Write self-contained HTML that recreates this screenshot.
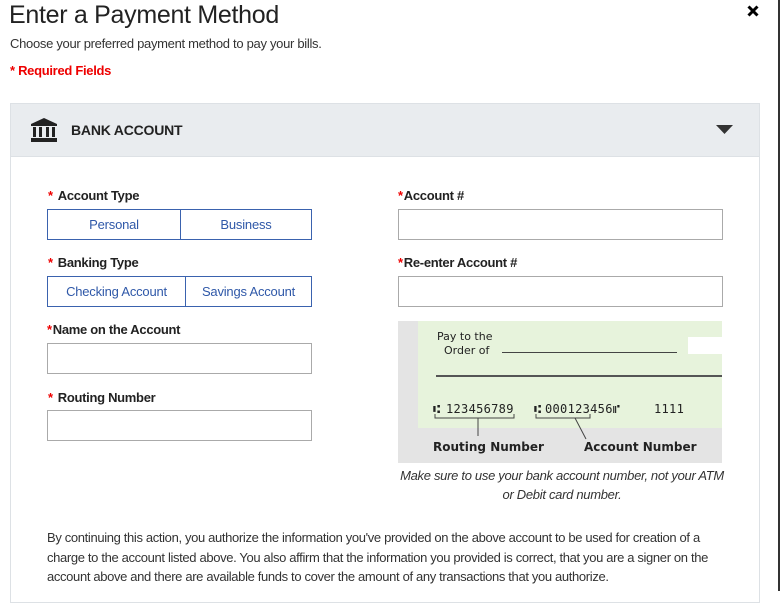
<!DOCTYPE html>
<html><head><style>
*{margin:0;padding:0;box-sizing:border-box}
body{width:780px;height:591px;overflow:hidden;background:#fff;font-family:"Liberation Sans Narrow","Liberation Sans",sans-serif;color:#222;position:relative}
.a{position:absolute}
h1{position:absolute;left:9px;top:1px;font-weight:normal;font-size:25px;font-family:"Liberation Sans",sans-serif;color:#222;letter-spacing:-0.3px}
.sub{left:10px;top:36px;font-size:13px;letter-spacing:-0.3px;font-family:"Liberation Sans",sans-serif;color:#333}
.req{left:10px;top:63px;font-size:13px;font-weight:bold;color:#e00;letter-spacing:-0.3px}
.panel{left:10px;top:103px;width:750px;height:500px;border:1px solid #dde1e5}
.hdr{left:11px;top:104px;width:748px;height:53px;background:#e9ecef;border-bottom:1px solid #dde1e5}
.lbl{font-size:13px;font-weight:bold;color:#222;letter-spacing:-0.3px}
.lbl i{color:#e00;font-style:normal;margin-right:5px}
.seg{display:flex;border:1px solid #3a62ae;height:31px}
.seg div{display:flex;align-items:center;justify-content:center;color:#2f58a8;font-size:13px;font-family:"Liberation Sans",sans-serif;letter-spacing:-0.2px}
.seg div+div{border-left:1px solid #3a62ae}
.inp{border:1px solid #aaa;height:31px;width:265px}
.disc{left:47px;top:528px;width:690px;font-size:13px;line-height:19.5px;color:#333;letter-spacing:-0.35px}
.m{position:absolute;top:402px;font-size:12px;color:#222;font-family:'DejaVu Sans Mono',monospace;white-space:pre;letter-spacing:0.3px}
</style></head><body>
<h1>Enter a Payment Method</h1>
<div class="a sub">Choose your preferred payment method to pay your bills.</div>
<div class="a req">* Required Fields</div>
<div class="a" style="right:0;top:0;width:2px;height:591px;background:#333"></div>
<svg class="a" style="left:747px;top:5px" width="12" height="12"><path d="M1.5 1.5L10.5 10.5M10.5 1.5L1.5 10.5" stroke="#000" stroke-width="3"/></svg>
<div class="a panel"></div>
<div class="a hdr"></div>
<svg class="a" style="left:30px;top:117px" width="28" height="26" viewBox="0 0 28 26"><path d="M14 1 L27 7 L27 9 L1 9 L1 7 Z" fill="#222"/><rect x="3" y="10" width="3" height="10" fill="#222"/><rect x="9" y="10" width="3" height="10" fill="#222"/><rect x="16" y="10" width="3" height="10" fill="#222"/><rect x="22" y="10" width="3" height="10" fill="#222"/><rect x="1" y="21" width="26" height="4" fill="#222"/></svg>
<div class="a" style="left:71px;top:122px;font-size:14px;font-weight:bold;color:#222;letter-spacing:-0.2px">BANK ACCOUNT</div>
<svg class="a" style="left:716px;top:125px" width="18" height="10"><path d="M0 0H17L8.5 9Z" fill="#333"/></svg>

<div class="a lbl" style="left:48px;top:188px"><i>*</i>Account Type</div>
<div class="a seg" style="left:47px;top:209px;width:265px"><div style="width:132px">Personal</div><div style="flex:1">Business</div></div>
<div class="a lbl" style="left:48px;top:255px"><i>*</i>Banking Type</div>
<div class="a seg" style="left:47px;top:276px;width:265px"><div style="width:137px">Checking Account</div><div style="flex:1">Savings Account</div></div>
<div class="a lbl" style="left:47px;top:322px"><i style="margin-right:1px">*</i>Name on the Account</div>
<div class="a inp" style="left:47px;top:343px"></div>
<div class="a lbl" style="left:48px;top:390px"><i>*</i>Routing Number</div>
<div class="a inp" style="left:47px;top:410px"></div>

<div class="a lbl" style="left:398px;top:188px"><i style="margin-right:1px">*</i>Account #</div>
<div class="a inp" style="left:398px;top:209px;width:325px"></div>
<div class="a lbl" style="left:398px;top:255px"><i style="margin-right:1px">*</i>Re-enter Account #</div>
<div class="a inp" style="left:398px;top:276px;width:325px"></div>

<div class="a" style="left:398px;top:321px;width:324px;height:142px;background:#e4e4e4"></div>
<div class="a" style="left:418px;top:321px;width:304px;height:107px;background:#e7f3dc"></div>
<div class="a" style="left:688px;top:337px;width:34px;height:17px;background:#fff"></div>
<div class="a" style="left:437px;top:330px;font-size:11px;line-height:14px;color:#222;font-family:'DejaVu Sans',sans-serif">Pay to the<br>&nbsp;&nbsp;Order of</div>
<div class="a" style="left:502px;top:352px;width:175px;height:1px;background:#444"></div>
<div class="a" style="left:436px;top:375px;width:286px;height:2px;background:#555"></div>
<div class="m" style="left:433px">⑆</div>
<div class="m" style="left:446px">123456789</div>
<div class="m" style="left:534px">⑆</div>
<div class="m" style="left:545px">000123456⑈</div>
<div class="m" style="left:654px">1111</div>
<svg class="a" style="left:430px;top:414px" width="170" height="30"><path d="M5 0V4H84V0M48 4V22M106 0V4H160V0M145 4L156 25" fill="none" stroke="#444" stroke-width="1"/></svg>
<div class="a" style="left:433px;top:440px;font-size:12px;font-weight:bold;color:#222;font-family:'DejaVu Sans',sans-serif">Routing Number</div>
<div class="a" style="left:584px;top:440px;font-size:12px;font-weight:bold;color:#222;font-family:'DejaVu Sans',sans-serif">Account Number</div>
<div class="a" style="left:398px;top:466px;width:328px;text-align:center;font-size:13px;font-style:italic;line-height:19px;color:#333;letter-spacing:-0.3px">Make sure to use your bank account number, not your ATM<br>or Debit card number.</div>

<div class="a disc">By continuing this action, you authorize the information you've provided on the above account to be used for creation of a charge to the account listed above. You also affirm that the information you provided is correct, that you are a signer on the account above and there are available funds to cover the amount of any transactions that you authorize.</div>
</body></html>
